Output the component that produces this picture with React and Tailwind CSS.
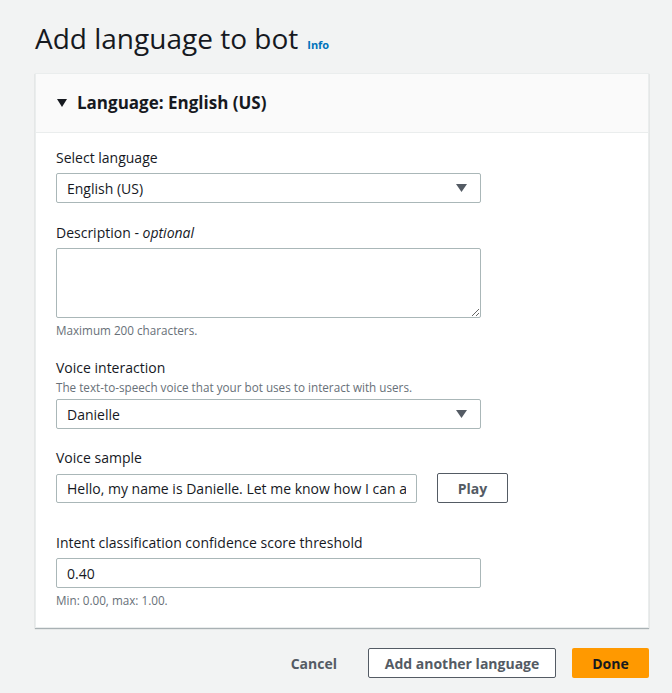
import { useState } from "react";

const font = { fontFamily: '"Open Sans", "Noto Sans", Arial, sans-serif' };

const Caret = () => (
  <svg width="11" height="8" viewBox="0 0 11 8" className="shrink-0">
    <path d="M0 0 H11 L5.5 8 Z" fill="#545b64" />
  </svg>
);

const SelectBox = ({ value }) => (
  <div className="flex h-[30px] w-[425px] items-center justify-between rounded-[2px] border border-[#aab7b8] bg-white pl-[10px] pr-[13px] text-[14px] text-[#16191f]">
    <span>{value}</span>
    <Caret />
  </div>
);

const Label = ({ children, className = "" }) => (
  <div className={`text-[14px] leading-[22px] text-[#16191f] ${className}`}>{children}</div>
);

const Hint = ({ children, className = "" }) => (
  <div className={`text-[11.7px] leading-[16px] text-[#687078] ${className}`}>{children}</div>
);

export default function App() {
  const [desc, setDesc] = useState("");
  const [threshold, setThreshold] = useState("0.40");

  return (
    <div style={font} className="min-h-[693px] w-[672px] bg-[#f2f3f3] pl-[35px] pr-[23px] pt-[20px]">
      {/* Titulo */}
      <div className="flex items-baseline gap-[9px]">
        <h1 className="text-[28px] leading-[36px] text-[#16191f]">Add language to bot</h1>
        <span className="text-[11px] font-bold text-[#0073bb]">Info</span>
      </div>

      {/* Tarjeta */}
      <div className="mt-[17px] border border-[#eaeded] bg-white shadow-[0_1px_1px_0_rgba(0,28,36,0.3)]">
        <div className="flex h-[59px] items-center gap-[10px] border-b border-[#eaeded] bg-[#fafafa] pl-[21px]">
          <svg width="10" height="8" viewBox="0 0 10 8">
            <path d="M0 0 H10 L5 8 Z" fill="#16191f" />
          </svg>
          <span className="text-[17px] font-bold text-[#16191f]">Language: English (US)</span>
        </div>

        <div className="px-[20px] pb-[19px] pt-[14px]">
          <Label>Select language</Label>
          <div className="mt-[4px]">
            <SelectBox value="English (US)" />
          </div>

          <Label className="mt-[19px]">
            Description - <i>optional</i>
          </Label>
          <textarea
            value={desc}
            onChange={(e) => setDesc(e.target.value)}
            className="mt-[4px] block h-[70px] w-[425px] rounded-[2px] border border-[#aab7b8] bg-white"
          />
          <Hint className="mt-[4px]">Maximum 200 characters.</Hint>

          <Label className="mt-[19px] leading-[20px]">Voice interaction</Label>
          <Hint>The text-to-speech voice that your bot uses to interact with users.</Hint>
          <div className="mt-[4px]">
            <SelectBox value="Danielle" />
          </div>

          <Label className="mt-[18px]">Voice sample</Label>
          <div className="mt-[4px] flex items-center gap-[20px]">
            <input
              readOnly
              value="Hello, my name is Danielle. Let me know how I can assist you."
              className="h-[29px] w-[361px] rounded-[2px] border border-[#aab7b8] px-[10px] text-[14px] text-[#16191f] outline-none"
            />
            <button className="h-[30px] w-[71px] rounded-[2px] border border-[#545b64] bg-white text-[14px] font-bold text-[#545b64]">
              Play
            </button>
          </div>

          <Label className="mt-[29px]">Intent classification confidence score threshold</Label>
          <input
            value={threshold}
            onChange={(e) => setThreshold(e.target.value)}
            className="mt-[4px] block h-[30px] w-[425px] rounded-[2px] border border-[#aab7b8] px-[10px] text-[14px] text-[#16191f] outline-none"
          />
          <Hint className="mt-[4px]">Min: 0.00, max: 1.00.</Hint>
        </div>
      </div>

      {/* Botones */}
      <div className="mt-[20px] flex items-center justify-end gap-[16px] pb-[15px]">
        <button className="px-[15px] text-[14px] font-bold text-[#545b64]">Cancel</button>
        <button className="h-[30px] w-[188px] rounded-[2px] border border-[#545b64] bg-white text-[14px] font-bold text-[#545b64]">
          Add another language
        </button>
        <button className="h-[30px] w-[77px] rounded-[2px] bg-[#ff9900] text-[14px] font-bold text-[#16191f]">
          Done
        </button>
      </div>
    </div>
  );
}
